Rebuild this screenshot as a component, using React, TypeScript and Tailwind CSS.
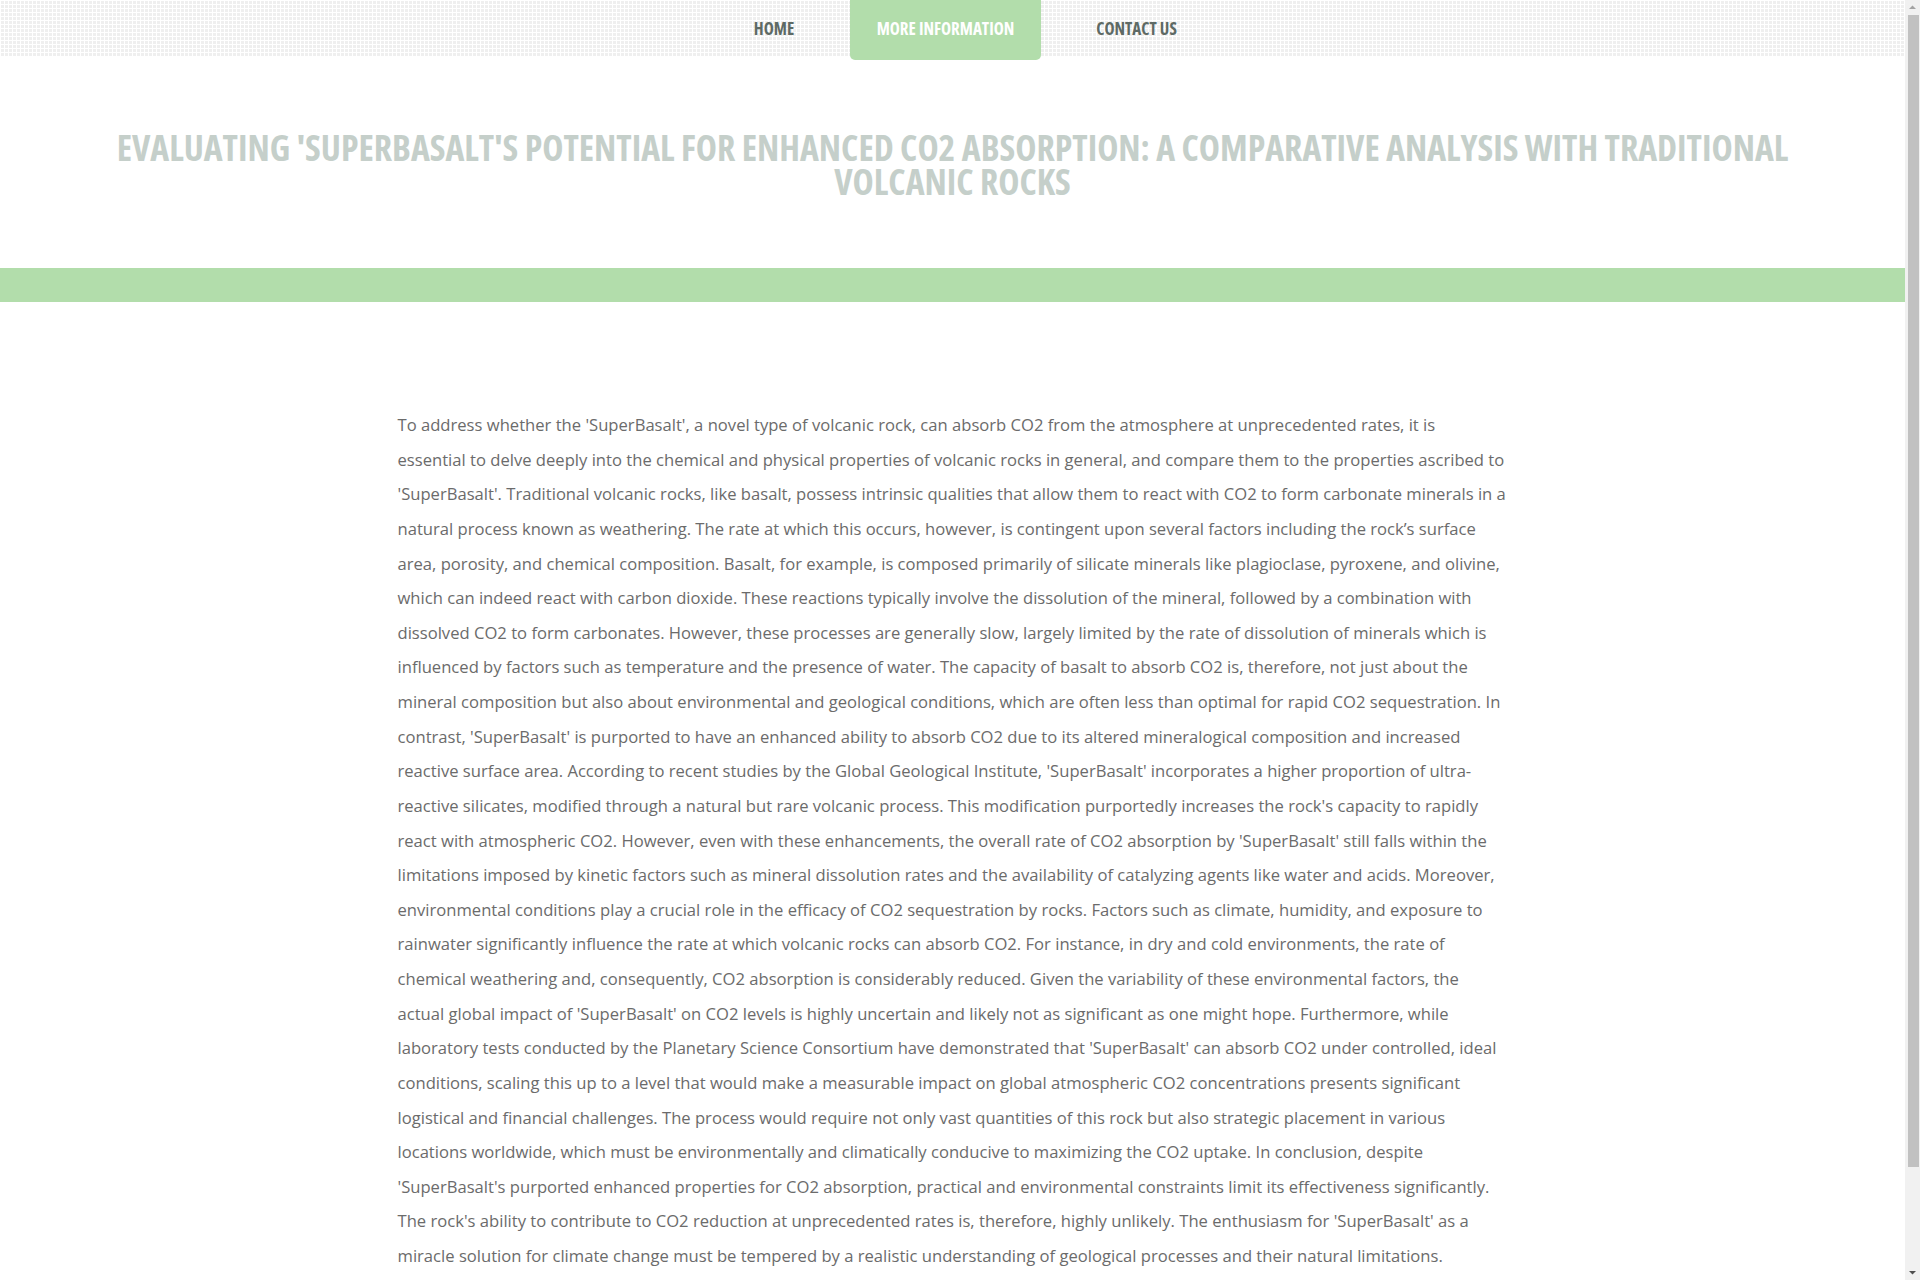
import React from "react";

const paragraph = `To address whether the 'SuperBasalt', a novel type of volcanic rock, can absorb CO2 from the atmosphere at unprecedented rates, it is essential to delve deeply into the chemical and physical properties of volcanic rocks in general, and compare them to the properties ascribed to 'SuperBasalt'. Traditional volcanic rocks, like basalt, possess intrinsic qualities that allow them to react with CO2 to form carbonate minerals in a natural process known as weathering. The rate at which this occurs, however, is contingent upon several factors including the rock’s surface area, porosity, and chemical composition. Basalt, for example, is composed primarily of silicate minerals like plagioclase, pyroxene, and olivine, which can indeed react with carbon dioxide. These reactions typically involve the dissolution of the mineral, followed by a combination with dissolved CO2 to form carbonates. However, these processes are generally slow, largely limited by the rate of dissolution of minerals which is influenced by factors such as temperature and the presence of water. The capacity of basalt to absorb CO2 is, therefore, not just about the mineral composition but also about environmental and geological conditions, which are often less than optimal for rapid CO2 sequestration. In contrast, 'SuperBasalt' is purported to have an enhanced ability to absorb CO2 due to its altered mineralogical composition and increased reactive surface area. According to recent studies by the Global Geological Institute, 'SuperBasalt' incorporates a higher proportion of ultra-reactive silicates, modified through a natural but rare volcanic process. This modification purportedly increases the rock's capacity to rapidly react with atmospheric CO2. However, even with these enhancements, the overall rate of CO2 absorption by 'SuperBasalt' still falls within the limitations imposed by kinetic factors such as mineral dissolution rates and the availability of catalyzing agents like water and acids. Moreover, environmental conditions play a crucial role in the efficacy of CO2 sequestration by rocks. Factors such as climate, humidity, and exposure to rainwater significantly influence the rate at which volcanic rocks can absorb CO2. For instance, in dry and cold environments, the rate of chemical weathering and, consequently, CO2 absorption is considerably reduced. Given the variability of these environmental factors, the actual global impact of 'SuperBasalt' on CO2 levels is highly uncertain and likely not as significant as one might hope. Furthermore, while laboratory tests conducted by the Planetary Science Consortium have demonstrated that 'SuperBasalt' can absorb CO2 under controlled, ideal conditions, scaling this up to a level that would make a measurable impact on global atmospheric CO2 concentrations presents significant logistical and financial challenges. The process would require not only vast quantities of this rock but also strategic placement in various locations worldwide, which must be environmentally and climatically conducive to maximizing the CO2 uptake. In conclusion, despite 'SuperBasalt's purported enhanced properties for CO2 absorption, practical and environmental constraints limit its effectiveness significantly. The rock's ability to contribute to CO2 reduction at unprecedented rates is, therefore, highly unlikely. The enthusiasm for 'SuperBasalt' as a miracle solution for climate change must be tempered by a realistic understanding of geological processes and their natural limitations.`;

function Scrollbar() {
  return (
    <div className="fixed top-0 right-0 h-screen w-[15px] bg-[#f1f1f1] flex flex-col items-center">
      <svg width="15" height="15" viewBox="0 0 15 15" className="shrink-0">
        <path d="M4 9 L7.5 5.5 L11 9 Z" fill="#a3a3a3" />
      </svg>
      <div className="w-[11px] h-[1152px] bg-[#c1c1c1] ml-[1px]" />
      <div className="flex-1" />
      <svg width="15" height="15" viewBox="0 0 15 15" className="shrink-0">
        <path d="M4 6 L7.5 9.5 L11 6 Z" fill="#505050" />
      </svg>
    </div>
  );
}

export default function App() {
  return (
    <div className="min-h-screen bg-white font-['Open_Sans',sans-serif] pr-[15px]">
      <header className="h-[57px] bg-[#efefef] bg-[linear-gradient(to_right,#ffffff_1px,transparent_1px),linear-gradient(to_bottom,#ffffff_1px,transparent_1px)] [background-size:4px_4px]">
        <nav className="flex justify-center pl-[25px] gap-[30px] [font-stretch:75%] font-bold text-[17px] uppercase">
          <a className="w-[92px] h-[57px] flex items-center justify-center text-[#5e6a65]">Home</a>
          <a className="w-[191px] h-[60px] pb-[3px] flex items-center justify-center bg-[#b2ddab] text-white rounded-b-[5px] relative">More information</a>
          <a className="w-[131px] h-[57px] flex items-center justify-center text-[#5e6a65]">Contact us</a>
        </nav>
      </header>
      <section className="pt-[73px] pb-[70px] px-[110px]">
        <h1 className="text-center uppercase font-bold [font-stretch:75%] text-[35.8px] leading-[34px] text-[#c5cfca]">
          Evaluating 'SuperBasalt's Potential for Enhanced CO2 Absorption: A Comparative Analysis with Traditional Volcanic Rocks
        </h1>
      </section>
      <div className="h-[34px] bg-[#b2ddab]" />
      <main className="max-w-[1140px] mx-auto px-[15px] pt-[106px] pb-[120px]">
        <p className="text-[16.63px] leading-[34.62px] text-[#6b6b6b]">{paragraph}</p>
      </main>
      <Scrollbar />
    </div>
  );
}
